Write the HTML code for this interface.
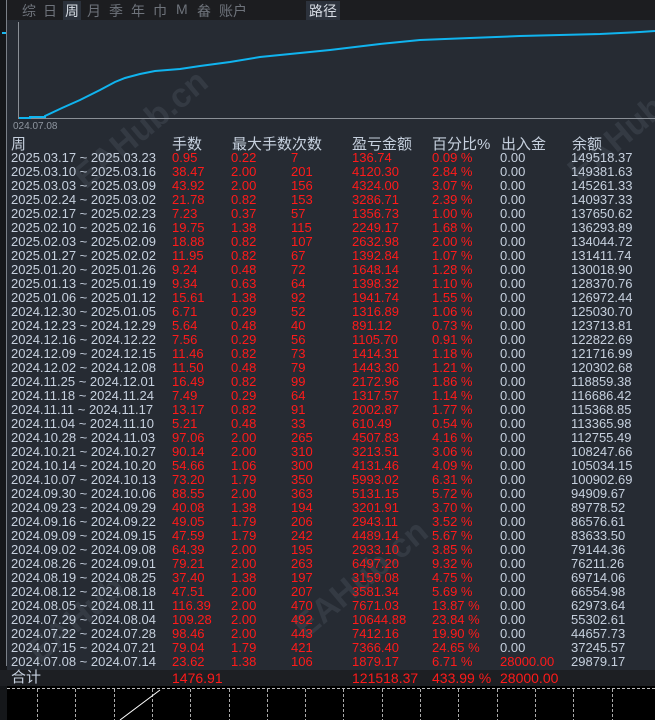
<!DOCTYPE html><html><head><meta charset="utf-8"><style>
body{margin:0;width:655px;height:720px;background:#000;overflow:hidden;font-family:"Liberation Sans","Noto Sans CJK SC",sans-serif;position:relative}
.top{position:absolute;left:0;top:0;width:655px;height:20px;background:#1c1d20;color:#6e737b;font-size:14px}
.top span{position:absolute;top:1px}
.main{position:absolute;left:0;top:20px;width:655px;height:650px;background:#262b33}
.lb{position:absolute;left:6px;top:0;width:1px;height:666px;background:#7a8088}
.r{position:absolute;left:0;height:14px;font-size:13px;line-height:14px;white-space:nowrap}
.r span{position:absolute;top:0}
.w{color:#c6d0de}.d{color:#ff1a1a}
.tot{position:absolute;left:0;top:670px;width:655px;height:16px;background:#1d1f23}
</style></head><body>
<div class="top">
<span style="left:22px">综</span><span style="left:43px">日</span><span style="left:64px;color:#d8dde5;background:#2c323c;padding:0 2px;left:63px">周</span><span style="left:87px">月</span><span style="left:109px">季</span><span style="left:131px">年</span><span style="left:153px">巾</span><span style="left:176px">M</span><span style="left:197px">畚</span><span style="left:219px">账户</span>
<span style="left:306px;color:#d8dde5;background:#2c323c;padding:0 3px">路径</span>
</div>
<div class="main"></div>
<div style="position:absolute;left:0;top:0;width:7px;height:720px;background:#15171a"></div>
<div class="lb"></div>
<div style="position:absolute;left:2px;top:32px;width:4px;height:2px;background:#19b8f0"></div>
<svg style="position:absolute;left:0;top:0" width="655" height="140">
<line x1="18.5" y1="22" x2="18.5" y2="119" stroke="#8a8f96"/>
<line x1="18" y1="118.5" x2="655" y2="118.5" stroke="#8a8f96"/>
<polyline fill="none" stroke="#10b4ef" stroke-width="2" points="19,118 30,118 30,117 45,117 45,116 62,108 80,100 100,90 115,82 125,78 140,74 155,71 180,69 200,66 230,62 260,57 300,53 330,50 380,44 420,40 470,38 520,36 560,35 600,34 640,32 655,31"/>
<text x="13" y="129" fill="#8f96a0" font-size="10" font-family="Liberation Sans">024.07.08</text>
</svg>
<div style="position:absolute;color:rgba(150,160,175,0.13);font-size:34px;font-weight:bold;transform:rotate(-40deg);left:60px;top:110px">EAHub.cn</div>
<div style="position:absolute;color:rgba(150,160,175,0.13);font-size:34px;font-weight:bold;transform:rotate(-40deg);left:280px;top:560px">EAHub.cn</div>
<div style="position:absolute;color:rgba(150,160,175,0.13);font-size:34px;font-weight:bold;transform:rotate(-40deg);left:560px;top:120px">EAHub</div>
<div style="position:absolute;color:rgba(150,160,175,0.13);font-size:34px;font-weight:bold;transform:rotate(-40deg);left:20px;top:600px">EAHub</div>
<div class="r w" style="top:137px;font-size:15px;height:16px;line-height:16px"><span style="left:11px">周</span><span style="left:172px">手数</span><span style="left:232px">最大手数次数</span><span style="left:352px">盈亏金额</span><span style="left:432px">百分比%</span><span style="left:501px">出入金</span><span style="left:572px">余额</span></div>
<div id="rows"></div>
<div class="tot"></div>
<div class="r" style="top:671px;font-size:14px"><span class="w" style="left:11px;font-size:15px">合计</span><span class="d" style="left:172px">1476.91</span><span class="d" style="left:352px">121518.37</span><span class="d" style="left:432px">433.99 %</span><span class="d" style="left:500px">28000.00</span></div>
<svg style="position:absolute;left:0;top:686px" width="655" height="34">
<line x1="7" y1="2.5" x2="655" y2="2.5" stroke="#bbb" stroke-dasharray="3,2"/>
<g stroke="#aaa" stroke-dasharray="3,2"><line x1="37.5" y1="3" x2="37.5" y2="34"/><line x1="75.5" y1="3" x2="75.5" y2="34"/><line x1="114.5" y1="3" x2="114.5" y2="34"/><line x1="152.5" y1="3" x2="152.5" y2="34"/><line x1="190.5" y1="3" x2="190.5" y2="34"/><line x1="229.5" y1="3" x2="229.5" y2="34"/><line x1="267.5" y1="3" x2="267.5" y2="34"/><line x1="305.5" y1="3" x2="305.5" y2="34"/><line x1="343.5" y1="3" x2="343.5" y2="34"/><line x1="382.5" y1="3" x2="382.5" y2="34"/><line x1="420.5" y1="3" x2="420.5" y2="34"/><line x1="458.5" y1="3" x2="458.5" y2="34"/><line x1="497.5" y1="3" x2="497.5" y2="34"/><line x1="535.5" y1="3" x2="535.5" y2="34"/><line x1="573.5" y1="3" x2="573.5" y2="34"/><line x1="612.5" y1="3" x2="612.5" y2="34"/></g>
<line x1="160" y1="4" x2="120" y2="34" stroke="#fff"/>
</svg>
<script>
var d=[["2025.03.17 ~ 2025.03.23","0.95","0.22","7","136.74","0.09 %","149518.37"],
["2025.03.10 ~ 2025.03.16","38.47","2.00","201","4120.30","2.84 %","149381.63"],
["2025.03.03 ~ 2025.03.09","43.92","2.00","156","4324.00","3.07 %","145261.33"],
["2025.02.24 ~ 2025.03.02","21.78","0.82","153","3286.71","2.39 %","140937.33"],
["2025.02.17 ~ 2025.02.23","7.23","0.37","57","1356.73","1.00 %","137650.62"],
["2025.02.10 ~ 2025.02.16","19.75","1.38","115","2249.17","1.68 %","136293.89"],
["2025.02.03 ~ 2025.02.09","18.88","0.82","107","2632.98","2.00 %","134044.72"],
["2025.01.27 ~ 2025.02.02","11.95","0.82","67","1392.84","1.07 %","131411.74"],
["2025.01.20 ~ 2025.01.26","9.24","0.48","72","1648.14","1.28 %","130018.90"],
["2025.01.13 ~ 2025.01.19","9.34","0.63","64","1398.32","1.10 %","128370.76"],
["2025.01.06 ~ 2025.01.12","15.61","1.38","92","1941.74","1.55 %","126972.44"],
["2024.12.30 ~ 2025.01.05","6.71","0.29","52","1316.89","1.06 %","125030.70"],
["2024.12.23 ~ 2024.12.29","5.64","0.48","40","891.12","0.73 %","123713.81"],
["2024.12.16 ~ 2024.12.22","7.56","0.29","56","1105.70","0.91 %","122822.69"],
["2024.12.09 ~ 2024.12.15","11.46","0.82","73","1414.31","1.18 %","121716.99"],
["2024.12.02 ~ 2024.12.08","11.50","0.48","79","1443.30","1.21 %","120302.68"],
["2024.11.25 ~ 2024.12.01","16.49","0.82","99","2172.96","1.86 %","118859.38"],
["2024.11.18 ~ 2024.11.24","7.49","0.29","64","1317.57","1.14 %","116686.42"],
["2024.11.11 ~ 2024.11.17","13.17","0.82","91","2002.87","1.77 %","115368.85"],
["2024.11.04 ~ 2024.11.10","5.21","0.48","33","610.49","0.54 %","113365.98"],
["2024.10.28 ~ 2024.11.03","97.06","2.00","265","4507.83","4.16 %","112755.49"],
["2024.10.21 ~ 2024.10.27","90.14","2.00","310","3213.51","3.06 %","108247.66"],
["2024.10.14 ~ 2024.10.20","54.66","1.06","300","4131.46","4.09 %","105034.15"],
["2024.10.07 ~ 2024.10.13","73.20","1.79","350","5993.02","6.31 %","100902.69"],
["2024.09.30 ~ 2024.10.06","88.55","2.00","363","5131.15","5.72 %","94909.67"],
["2024.09.23 ~ 2024.09.29","40.08","1.38","194","3201.91","3.70 %","89778.52"],
["2024.09.16 ~ 2024.09.22","49.05","1.79","206","2943.11","3.52 %","86576.61"],
["2024.09.09 ~ 2024.09.15","47.59","1.79","242","4489.14","5.67 %","83633.50"],
["2024.09.02 ~ 2024.09.08","64.39","2.00","195","2933.10","3.85 %","79144.36"],
["2024.08.26 ~ 2024.09.01","79.21","2.00","263","6497.20","9.32 %","76211.26"],
["2024.08.19 ~ 2024.08.25","37.40","1.38","197","3159.08","4.75 %","69714.06"],
["2024.08.12 ~ 2024.08.18","47.51","2.00","207","3581.34","5.69 %","66554.98"],
["2024.08.05 ~ 2024.08.11","116.39","2.00","470","7671.03","13.87 %","62973.64"],
["2024.07.29 ~ 2024.08.04","109.28","2.00","492","10644.88","23.84 %","55302.61"],
["2024.07.22 ~ 2024.07.28","98.46","2.00","443","7412.16","19.90 %","44657.73"],
["2024.07.15 ~ 2024.07.21","79.04","1.79","421","7366.40","24.65 %","37245.57"],
["2024.07.08 ~ 2024.07.14","23.62","1.38","106","1879.17","6.71 %","29879.17"]];
var h="";d.forEach(function(r,i){var io=i==d.length-1?'<span class="d" style="left:500px">28000.00</span>':'<span class="w" style="left:500px">0.00</span>';
h+='<div class="r" style="top:'+(151+i*14)+'px"><span class="w" style="left:11px">'+r[0]+'</span><span class="d" style="left:172px">'+r[1]+'</span><span class="d" style="left:231px">'+r[2]+'</span><span class="d" style="left:291px">'+r[3]+'</span><span class="d" style="left:352px">'+r[4]+'</span><span class="d" style="left:432px">'+r[5]+'</span>'+io+'<span class="w" style="left:571px">'+r[6]+'</span></div>';});
document.getElementById("rows").innerHTML=h;
</script>
</body></html>
